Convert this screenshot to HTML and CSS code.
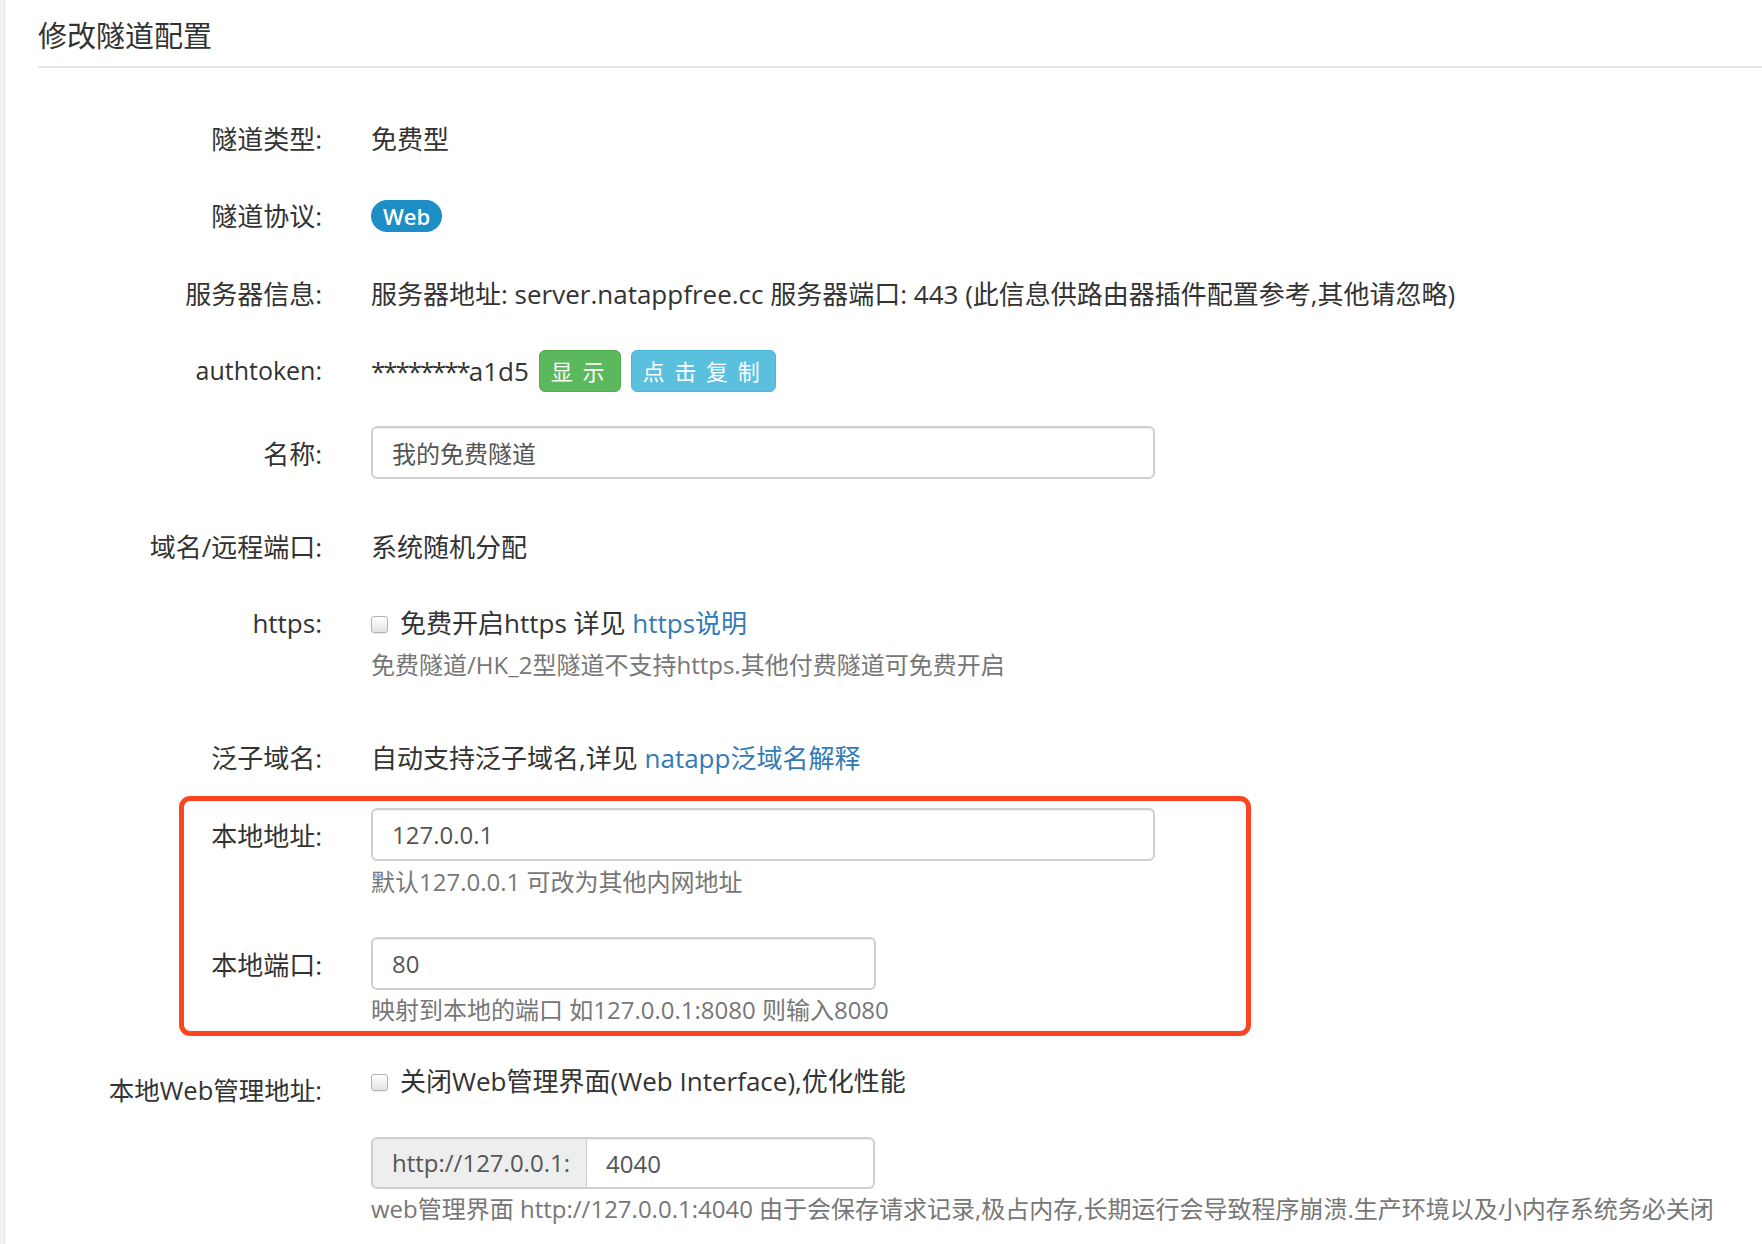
FILE: index.html
```html
<!DOCTYPE html>
<html lang="zh-CN">
<head>
<meta charset="utf-8">
<title>修改隧道配置</title>
<link rel="stylesheet" href="styles.css">
</head>
<body>
<div class="page">
  <h3 class="title">修改隧道配置</h3>
  <form class="form">
    <div class="row row-1">
      <label class="lbl">隧道类型:</label>
      <div class="ctrl static">免费型</div>
    </div>
    <div class="row row-2">
      <label class="lbl">隧道协议:</label>
      <div class="ctrl static flexline"><span class="badge">Web</span></div>
    </div>
    <div class="row row-3">
      <label class="lbl">服务器信息:</label>
      <div class="ctrl static">服务器地址: server.natappfree.cc 服务器端口: 443 (此信息供路由器插件配置参考,其他请忽略)</div>
    </div>
    <div class="row row-4">
      <label class="lbl lbl-latin">authtoken:</label>
      <div class="ctrl token">
        <span><span class="stars">********</span>a1d5</span>
        <button type="button" class="btn btn-green">显 示</button>
        <button type="button" class="btn btn-blue">点 击 复 制</button>
      </div>
    </div>
    <div class="row row-5">
      <label class="lbl lbl-input">名称:</label>
      <div class="ctrl"><input class="field field-wide" type="text" value="我的免费隧道"></div>
    </div>
    <div class="row row-6">
      <label class="lbl">域名/远程端口:</label>
      <div class="ctrl static">系统随机分配</div>
    </div>
    <div class="row row-7">
      <label class="lbl">https:</label>
      <div class="ctrl check-ctrl">
        <div class="check-line"><input type="checkbox" class="cb"><span>免费开启https 详见 <a href="#" class="link">https说明</a></span></div>
        <div class="help help-https">免费隧道/HK_2型隧道不支持https.其他付费隧道可免费开启</div>
      </div>
    </div>
    <div class="row row-8">
      <label class="lbl">泛子域名:</label>
      <div class="ctrl static">自动支持泛子域名,详见 <a href="#" class="link">natapp泛域名解释</a></div>
    </div>
    <div class="highlight">
      <div class="row row-9">
        <label class="lbl lbl-input">本地地址:</label>
        <div class="ctrl">
          <input class="field field-wide" type="text" value="127.0.0.1">
          <div class="help help-tight">默认127.0.0.1 可改为其他内网地址</div>
        </div>
      </div>
      <div class="row row-10">
        <label class="lbl lbl-input">本地端口:</label>
        <div class="ctrl">
          <input class="field field-short" type="text" value="80">
          <div class="help help-tight2">映射到本地的端口 如127.0.0.1:8080 则输入8080</div>
        </div>
      </div>
    </div>
    <div class="row row-11">
      <label class="lbl lbl-web">本地Web管理地址:</label>
      <div class="ctrl check-ctrl">
        <div class="check-line"><input type="checkbox" class="cb"><span>关闭Web管理界面(Web Interface),优化性能</span></div>
        <div class="input-group">
          <span class="addon">http://127.0.0.1:</span>
          <input class="group-field" type="text" value="4040">
        </div>
        <div class="help help-tight2">web管理界面 http://127.0.0.1:4040 由于会保存请求记录,极占内存,长期运行会导致程序崩溃.生产环境以及小内存系统务必关闭</div>
      </div>
    </div>
  </form>
</div>
</body>
</html>
```

FILE: styles.css
```css
html {
  background: #f3f3f3;
}
body {
  margin: 0;
  font-family: "Open Sans", "Noto Sans CJK SC", sans-serif;
  font-size: 26px;
  color: #333;
}
.page {
  margin-left: 4px;
  border-left: 1px solid #e3e3e3;
  background: #fff;
  min-height: 1244px;
  padding-left: 33px;
  box-sizing: border-box;
  --label-w: 284px;
}
.title {
  margin: 0;
  padding-top: 16px;
  padding-bottom: 10px;
  font-size: 29px;
  line-height: 40px;
  font-weight: normal;
  color: #333;
  border-bottom: 2px solid #e5e5e5;
}
.form {
  padding-top: 42px;
}
.row {
  display: flex;
  align-items: flex-start;
  gap: 49px;
}
.lbl {
  width: var(--label-w);
  flex: none;
  text-align: right;
  padding-top: 11px;
  line-height: 36px;
  white-space: nowrap;
}
.lbl-latin {
  font-size: 25px;
}
.lbl-input {
  padding-top: 10px;
}
.lbl-web {
  padding-top: 20px;
  font-size: 25.5px;
}
.ctrl {
  line-height: 36px;
}
.static {
  padding: 11px 0;
  white-space: nowrap;
}
.flexline {
  display: flex;
  align-items: center;
  height: 36px;
}
.badge {
  display: inline-flex;
  align-items: center;
  justify-content: center;
  height: 32px;
  padding: 0 12px;
  border-radius: 16px;
  background: #1e8ec7;
  color: #fff;
  font-weight: 600;
  font-size: 22px;
  line-height: 32px;
}
.row-1 { margin-bottom: 19px; }
.row-2 { margin-bottom: 20px; }
.row-3 { margin-bottom: 18px; }
.row-4 { margin-bottom: 25px; }
.row-5 { margin-bottom: 39px; }
.row-6 { margin-bottom: 18px; }
.row-7 { margin-bottom: 46px; }
.row-8 { margin-bottom: 9px; }
.row-9 { margin-bottom: 37px; }

.token {
  display: flex;
  align-items: center;
  gap: 10px;
  padding: 9px 0;
  height: 42px;
}
.stars {
  letter-spacing: -2.1px;
}
.btn {
  height: 42px;
  padding: 0 13px 0 11px;
  border-radius: 6px;
  border: 1px solid transparent;
  color: #fff;
  font-family: "Open Sans", "Noto Sans CJK SC", sans-serif;
  font-size: 22px;
  letter-spacing: 2px;
  line-height: 40px;
  cursor: pointer;
}
.btn-green {
  background: #5cb85c;
  border-color: #4cae4c;
}
.btn-blue {
  background: #5bc0de;
  border-color: #46b8da;
}
.field,
.group-field {
  box-sizing: border-box;
  height: 53px;
  border: 2px solid #cfcfcf;
  border-radius: 6px;
  box-shadow: inset 0 1px 1px rgba(0, 0, 0, 0.075);
  padding: 0 19px;
  font-family: "Open Sans", "Noto Sans CJK SC", sans-serif;
  font-size: 24px;
  color: #555;
  background: #fff;
  display: block;
}
.field-wide {
  width: 784px;
}
.field-short {
  width: 505px;
}
.help {
  color: #777;
  font-size: 24px;
  line-height: 36px;
  white-space: nowrap;
}
.help-https {
  margin-top: 6px;
}
.help-tight {
  margin-top: 3px;
}
.help-tight2 {
  margin-top: 2px;
}
.check-ctrl {
  padding-top: 11px;
}
.check-line {
  display: flex;
  align-items: center;
  gap: 12px;
  height: 36px;
  white-space: nowrap;
}
.cb {
  appearance: none;
  -webkit-appearance: none;
  width: 17px;
  height: 17px;
  margin: 2px 0 0 0;
  border: 1px solid #b3b3b3;
  border-radius: 3px;
  background: linear-gradient(#ffffff, #e3e3e3);
  box-shadow: 0 1px 1px rgba(0, 0, 0, 0.08);
  flex: none;
}
.link {
  color: #337ab7;
  text-decoration: none;
}
.highlight {
  --label-w: 138px;
  margin-left: 141px;
  width: 1072px;
  box-sizing: border-box;
  border: 5px solid #fc4420;
  border-radius: 11px;
  padding: 7px 0 3px 0;
  margin-bottom: 16px;
}
.input-group {
  display: flex;
  width: 504px;
  height: 52px;
  margin-top: 38px;
}
.addon {
  box-sizing: border-box;
  width: 216px;
  flex: none;
  height: 52px;
  display: flex;
  align-items: center;
  padding-left: 19px;
  background: #eee;
  border: 2px solid #cfcfcf;
  border-right: 1px solid #cfcfcf;
  border-radius: 6px 0 0 6px;
  color: #555;
  font-size: 24px;
  white-space: nowrap;
}
.group-field {
  height: 52px;
  flex: 1;
  min-width: 0;
  border-left: none;
  border-radius: 0 6px 6px 0;
}
```
